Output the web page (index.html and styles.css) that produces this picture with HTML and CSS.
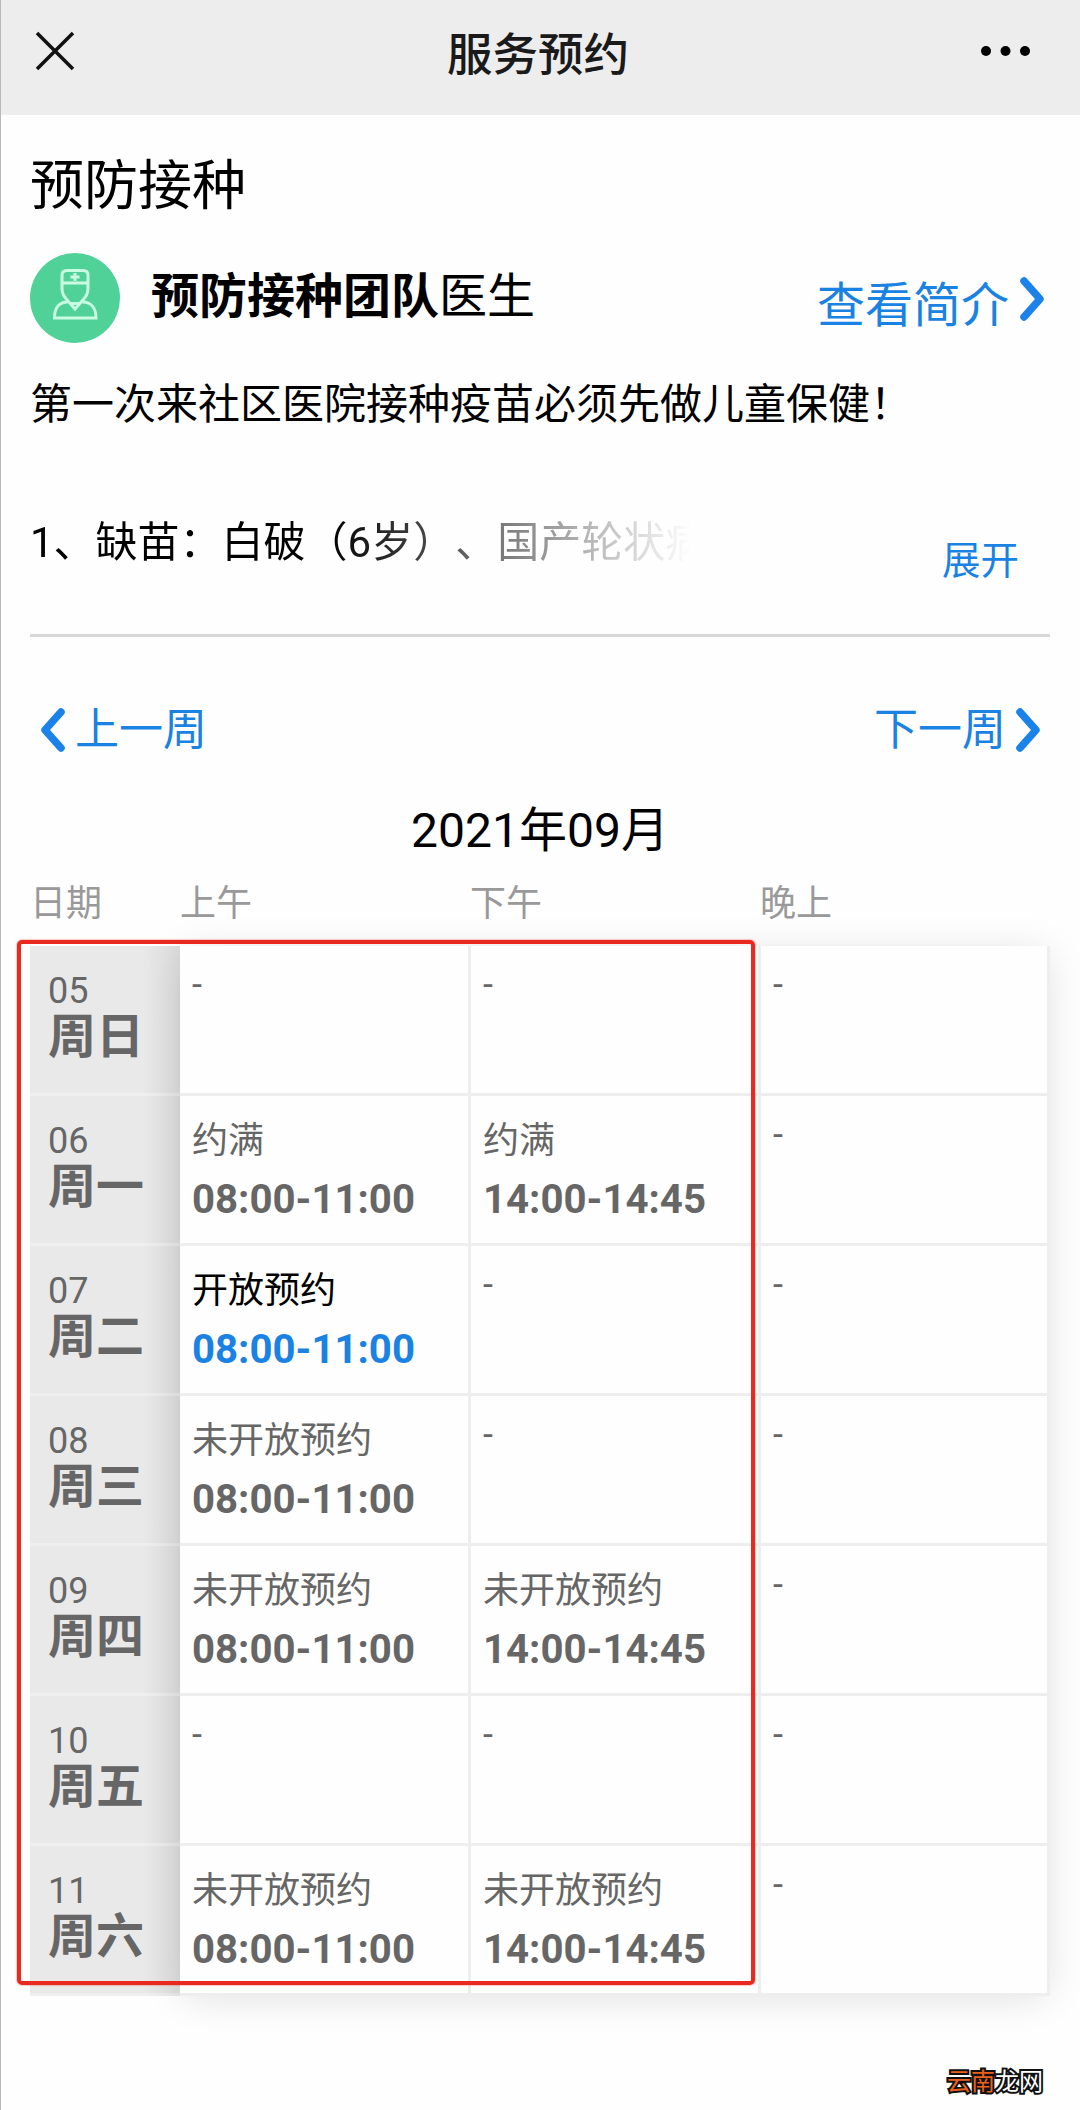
FILE: index.html
```html
<!DOCTYPE html>
<html lang="zh-CN">
<head>
  <meta charset="UTF-8" />
  <meta name="viewport" content="width=device-width, initial-scale=1.0"/>
  <title>服务预约</title>
  <link rel="stylesheet" href="styles.css">
</head>
<body>
  <header class="navbar">
    <svg class="close" viewBox="0 0 40 40"><path d="M2 2L38 38M38 2L2 38"/></svg>
    <h1>服务预约</h1>
    <svg class="more" viewBox="0 0 50 10"><circle cx="5" cy="5" r="5"/><circle cx="24.5" cy="5" r="5"/><circle cx="44" cy="5" r="5"/></svg>
  </header>

  <main>
    <h2 class="service">预防接种</h2>

    <div class="doctor">
      <svg class="avatar" viewBox="0 0 90 90">
        <circle class="avatar-bg" cx="45" cy="45" r="45"/>
        <path d="M32 30V22Q32 17.5 37 17.5H53Q58 17.5 58 22V30ZM32 30V36C32 42 36 46 38 48L45 56L52 48C54 46 58 42 58 36V30M37.500 49C29 49 24.500 55 24.500 65H66C66 55 61 49 52.500 49M40 50.500H50"/>
        <path d="M45 20V28M40.500 24H49.500"/>
      </svg>
      <p class="doctor-name"><b>预防接种团队</b>医生</p>
      <a class="intro">查看简介<svg class="arrow" viewBox="0 0 25 44"><path d="M4 4L20 22L4 40"/></svg></a>
    </div>

    <div class="notice">
      <p>第一次来社区医院接种疫苗必须先做儿童保健！</p>
      <div class="notice-more">
        <p class="fade">1、缺苗：白破（6岁）、国产轮状病</p>
        <a class="expand">展开</a>
      </div>
    </div>

    <div class="weeks">
      <a><svg class="arrow" viewBox="0 0 25 44"><path d="M21 4L5 22L21 40"/></svg>上一周</a>
      <a>下一周<svg class="arrow" viewBox="0 0 25 44"><path d="M4 4L20 22L4 40"/></svg></a>
    </div>

    <h3 class="month">2021年09月</h3>

    <div class="heads">
      <span>日期</span><span>上午</span><span>下午</span><span>晚上</span>
    </div>

    <div class="schedule">
      <div class="dates">
        <div class="date">05<b>周日</b></div>
        <div class="date">06<b>周一</b></div>
        <div class="date">07<b>周二</b></div>
        <div class="date">08<b>周三</b></div>
        <div class="date">09<b>周四</b></div>
        <div class="date">10<b>周五</b></div>
        <div class="date">11<b>周六</b></div>
      </div>
      <div class="slots">
        <div class="slot empty">-</div>
        <div class="slot empty">-</div>
        <div class="slot empty">-</div>

        <div class="slot">约满<b>08:00-11:00</b></div>
        <div class="slot">约满<b>14:00-14:45</b></div>
        <div class="slot empty">-</div>

        <div class="slot open">开放预约<b>08:00-11:00</b></div>
        <div class="slot empty">-</div>
        <div class="slot empty">-</div>

        <div class="slot">未开放预约<b>08:00-11:00</b></div>
        <div class="slot empty">-</div>
        <div class="slot empty">-</div>

        <div class="slot">未开放预约<b>08:00-11:00</b></div>
        <div class="slot">未开放预约<b>14:00-14:45</b></div>
        <div class="slot empty">-</div>

        <div class="slot empty">-</div>
        <div class="slot empty">-</div>
        <div class="slot empty">-</div>

        <div class="slot">未开放预约<b>08:00-11:00</b></div>
        <div class="slot">未开放预约<b>14:00-14:45</b></div>
        <div class="slot empty">-</div>
      </div>
      <div class="mark"></div>
    </div>
  </main>

  <footer class="site"><span>云南</span>龙网</footer>
</body>
</html>
```

FILE: styles.css
```css
* {
  box-sizing: border-box;
}
body {
  margin: 0;
  height: 2110px;
  overflow: hidden;
  display: flex;
  flex-direction: column;
  font-family: Roboto, "Noto Sans CJK SC", sans-serif;
  text-spacing-trim: space-all;
  color: #000;
  background: #fefefe;
  border-left: 1px solid #b8b8b8;
}
h1, h2, h3, p {
  margin: 0;
  font-weight: 400;
}
svg {
  display: block;
  fill: none;
}
a {
  color: #1a82e2;
}
.navbar {
  height: 115px;
  padding: 0 49px 14px 34px;
  display: flex;
  align-items: center;
  justify-content: space-between;
  background: #ededed;
}
.navbar h1 {
  font-size: 45.5px;
  font-weight: 500;
  color: #1a1a1a;
  margin-left: 20px;
}
.close {
  width: 40px;
  height: 40px;
  stroke: #111;
  stroke-width: 3.5;
}
.more {
  width: 50px;
  height: 10px;
  fill: #000;
}
main {
  padding: 0 30px 0 29px;
}
.service {
  font-size: 54px;
  line-height: 70px;
  padding-top: 37px;
}
.doctor {
  display: flex;
  align-items: center;
  height: 90px;
  margin-top: 31px;
}
.avatar {
  width: 90px;
  height: 90px;
  stroke: #c9fbe2;
  stroke-width: 3;
}
.avatar-bg {
  fill: #50d197;
  stroke: none;
}
.doctor-name {
  font-size: 48px;
  line-height: 60px;
  margin-left: 31px;
  padding-bottom: 3px;
}
.intro {
  display: flex;
  align-items: center;
  margin-left: auto;
  font-size: 48px;
  line-height: 60px;
  padding: 15px 5px 0 0;
}
.arrow {
  width: 25px;
  height: 44px;
  stroke: #1a82e8;
  stroke-width: 7.5;
  stroke-linecap: round;
  stroke-linejoin: round;
}
.intro .arrow {
  margin: 0 0 13px 11px;
}
.notice {
  height: 294px;
  padding-top: 27px;
  font-size: 42px;
  line-height: 70px;
  border-bottom: 3px solid #d8d8d8;
}
.notice-more {
  display: flex;
  justify-content: space-between;
  margin-top: 68px;
  padding-right: 31px;
}
.fade {
  width: 661px;
  overflow: hidden;
  white-space: nowrap;
  -webkit-mask-image: linear-gradient(to right, #000 45%, transparent);
  mask-image: linear-gradient(to right, #000 45%, transparent);
}
.expand {
  font-size: 38.5px;
  padding-top: 18px;
}
.weeks {
  display: flex;
  justify-content: space-between;
  margin-top: 62px;
  padding: 0 9px 0 10px;
  font-size: 44px;
  line-height: 60px;
}
.weeks a {
  display: flex;
  align-items: center;
  gap: 10px;
  padding-top: 1px;
}
.month {
  font-size: 48px;
  line-height: 60px;
  margin-top: 41px;
  text-align: center;
}
.heads {
  display: grid;
  grid-template-columns: 150px 290px 290px 290px;
  margin-top: 23px;
  font-size: 36px;
  line-height: 40px;
  color: #999;
}
.schedule {
  position: relative;
  display: flex;
  margin-top: 22px;
  color: #666;
  font-size: 36px;
}
.dates {
  width: 150px;
  background: linear-gradient(to right, #e9e9e9 75%, #dcdcdc);
}
.date {
  height: 150px;
  padding: 24px 0 0 18px;
  line-height: 42px;
  border-bottom: 3px solid rgba(255, 255, 255, 0.3);
}
.date b {
  display: block;
  font-size: 48px;
  line-height: 50px;
}
.slots {
  width: 870px;
  display: grid;
  grid-template-columns: 291px 290px 289px;
  background: #fefefe;
  box-shadow: 0 4px 38px -4px rgba(0, 0, 0, 0.13);
}
.slot {
  height: 150px;
  padding: 22px 0 0 12px;
  line-height: 46px;
  border-right: 3px solid #eee;
  border-bottom: 3px solid #eee;
}
.slot b {
  display: block;
  font-size: 40.2px;
  line-height: 50px;
  margin-top: 11px;
}
.slot.empty {
  padding-top: 16px;
}
.slot.open {
  color: #000;
}
.slot.open b {
  color: #1a82e2;
}
/* red frame around the morning and afternoon columns */
.mark {
  position: absolute;
  top: -6px;
  left: -13px;
  width: 738px;
  height: 1045px;
  border: 4px solid #e8291f;
  border-radius: 5px;
  box-shadow: 0 0 1px 1px rgba(232, 41, 31, 0.25);
}
.site {
  margin-top: auto;
  padding: 0 37px 12px 0;
  text-align: right;
  font-size: 24px;
  line-height: 32px;
  color: #fff;
  -webkit-text-stroke: 4px #111;
  paint-order: stroke fill;
}
.site span {
  color: #e8601c;
}
```
